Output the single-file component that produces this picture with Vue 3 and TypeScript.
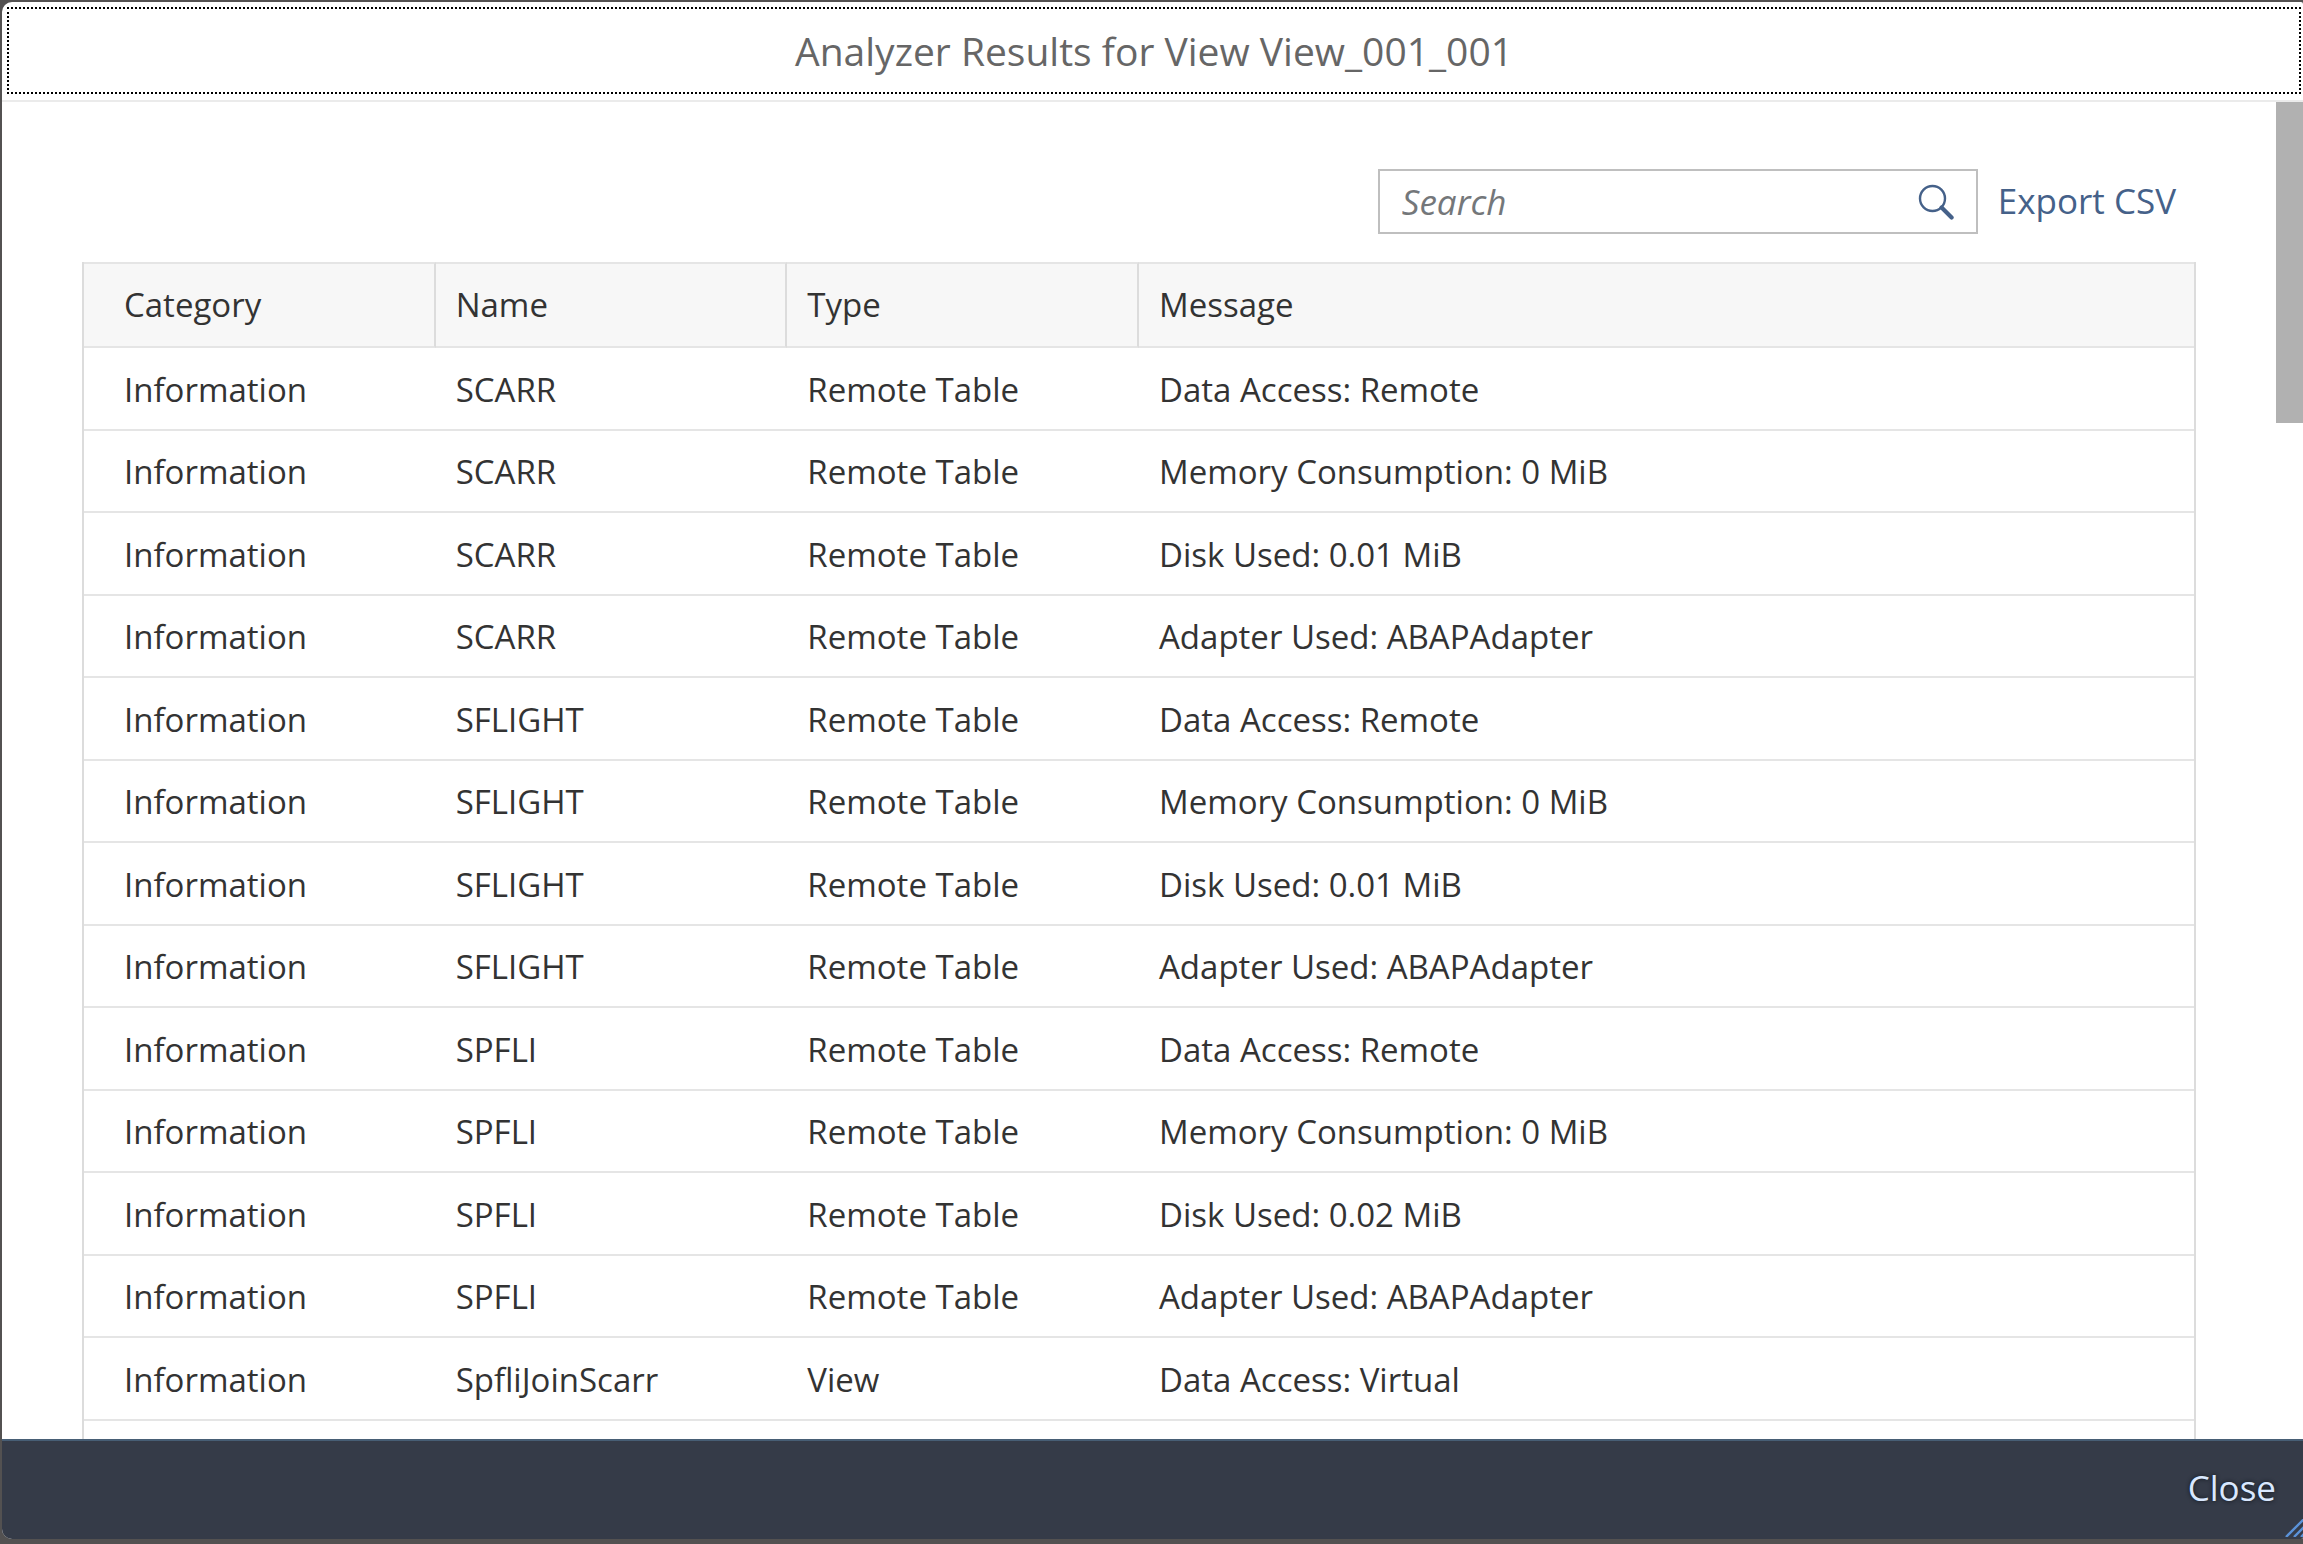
<script setup lang="ts">
import { computed, ref } from 'vue'

interface ResultRow {
  category: string
  name: string
  type: string
  message: string
}

const query = ref('')

const remoteTable = (name: string, disk: string): ResultRow[] =>
  [
    'Data Access: Remote',
    'Memory Consumption: 0 MiB',
    `Disk Used: ${disk} MiB`,
    'Adapter Used: ABAPAdapter',
  ].map((message) => ({ category: 'Information', name, type: 'Remote Table', message }))

const rows: ResultRow[] = [
  ...remoteTable('SCARR', '0.01'),
  ...remoteTable('SFLIGHT', '0.01'),
  ...remoteTable('SPFLI', '0.02'),
  { category: 'Information', name: 'SpfliJoinScarr', type: 'View', message: 'Data Access: Virtual' },
]

const visibleRows = computed(() => {
  const q = query.value.trim().toLowerCase()
  return q ? rows.filter((r) => Object.values(r).some((v) => v.toLowerCase().includes(q))) : rows
})
</script>

<template>
  <div class="backdrop">
    <section class="dialog" role="dialog" aria-labelledby="dialog-title">
      <header class="dialog-header">
        <h1 id="dialog-title" class="title">Analyzer Results for View View_001_001</h1>
      </header>

      <div class="body">
        <main class="content">
          <div class="toolbar">
            <form class="search" role="search" @submit.prevent>
              <input v-model="query" type="text" placeholder="Search" aria-label="Search" />
              <button type="submit" aria-label="Start search">
                <svg viewBox="0 0 36 36" width="36" height="36" aria-hidden="true">
                  <circle cx="14.5" cy="14.5" r="12.5" fill="none" stroke="currentColor" stroke-width="2.4" />
                  <path d="M23.6 23.6 33.6 33.6" stroke="currentColor" stroke-width="4.2" stroke-linecap="round" />
                </svg>
              </button>
            </form>
            <button type="button" class="export">Export CSV</button>
          </div>

          <div class="grid">
            <table>
              <thead>
                <tr>
                  <th scope="col">Category</th>
                  <th scope="col">Name</th>
                  <th scope="col">Type</th>
                  <th scope="col" class="wide">Message</th>
                </tr>
              </thead>
              <tbody>
                <tr v-for="(row, i) in visibleRows" :key="i">
                  <td>{{ row.category }}</td>
                  <td>{{ row.name }}</td>
                  <td>{{ row.type }}</td>
                  <td>{{ row.message }}</td>
                </tr>
              </tbody>
            </table>
          </div>
        </main>
        <div class="scroll-track" aria-hidden="true"><div class="scroll-thumb"></div></div>
      </div>

      <footer class="dialog-footer">
        <button type="button" class="close">Close</button>
        <svg class="resize" viewBox="0 0 18 18" width="18" height="18" aria-hidden="true">
          <path d="M1 18 19 0M9 18 19 8M16 18 19 15" fill="none" stroke="#5b92d8" stroke-width="2.4" />
        </svg>
      </footer>
    </section>
  </div>
</template>

<style>
body {
  margin: 0;
}
</style>

<style scoped>
.backdrop {
  box-sizing: border-box;
  height: 100vh;
  padding: 2px 0 5px 2px;
  background: #535151;
  font-family: "Open Sans", "Noto Sans", sans-serif;
  font-size: 35px;
  line-height: 46px;
  color: #333;
}

.dialog {
  display: flex;
  flex-direction: column;
  height: 100%;
  overflow: hidden;
  border-radius: 10px 2px 2px 10px;
  background: #fff;
}

.dialog-header {
  flex: none;
  padding: 5px 2px 6px 5px;
  border-bottom: 2px solid #ebebeb;
}

.title {
  margin: 0;
  padding: 17px 0 16px;
  border: 2px dotted #000;
  font-size: 39px;
  font-weight: 400;
  line-height: 50px;
  text-align: center;
  color: #666;
}

.body {
  display: flex;
  flex: 1;
  min-height: 0;
}

.content {
  display: flex;
  flex: 1;
  flex-direction: column;
  min-width: 0;
  overflow: hidden;
  padding: 67px 80px 0;
}

.toolbar {
  display: flex;
  flex: none;
  justify-content: flex-end;
  gap: 20px;
  margin-bottom: 28px;
  padding-right: 20px;
}

.search {
  box-sizing: border-box;
  display: flex;
  align-items: center;
  width: 600px;
  height: 65px;
  border: 2px solid #bfbfbf;
}

button,
input {
  margin: 0;
  padding: 0;
  border: 0;
  background: none;
  color: inherit;
  font: inherit;
}

.search input {
  flex: 1;
  min-width: 0;
  padding-left: 22px;
  outline: none;
}

.search input::placeholder {
  color: #74777a;
  font-style: italic;
  opacity: 1;
}

.search button {
  display: flex;
  padding: 0 22px;
  color: #456189;
}

.export {
  padding-bottom: 2px;
  color: #456189;
}

.grid {
  flex: 1;
  border: solid #dcdcdc;
  border-width: 0 2px;
}

table {
  width: 100%;
  table-layout: fixed;
  border-collapse: separate;
  border-spacing: 0;
  font-size: 33px;
}

th,
td {
  box-sizing: border-box;
  height: 83px;
  padding: 2px 0 0 20px;
  border-bottom: 2px solid #e5e5e5;
  text-align: left;
  font-weight: 400;
  white-space: nowrap;
}

tbody tr:nth-child(even) td {
  height: 82px;
}

th {
  height: 86px;
  padding-top: 0;
  border-top: 2px solid #e5e5e5;
  background: #f7f7f7;
}

th:not(:last-child) {
  border-right: 2px solid #dcdcdc;
}

th.wide {
  width: 50%;
}

th:first-child,
td:first-child {
  padding-left: 40px;
}

.scroll-track {
  flex: none;
  width: 27px;
}

.scroll-thumb {
  height: 24%;
  background: #b1b1b1;
}

.dialog-footer {
  box-sizing: border-box;
  position: relative;
  display: flex;
  flex: none;
  align-items: center;
  justify-content: flex-end;
  height: 100px;
  padding: 0 27px 4px 0;
  border-top: 2px solid #475e75;
  background: #353b48;
}

.close {
  color: #d9e8ff;
  text-shadow: 0 0 4px #10151d;
}

.resize {
  position: absolute;
  right: 0;
  bottom: 2px;
}
</style>
